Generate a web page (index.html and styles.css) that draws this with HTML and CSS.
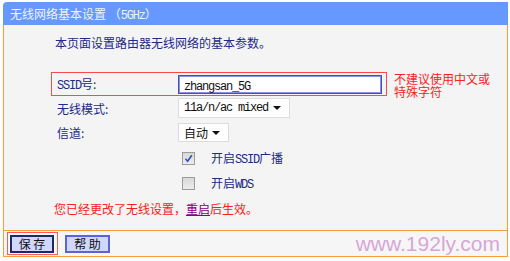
FILE: index.html
```html
<!DOCTYPE html>
<html lang="zh-CN">
<head>
<meta charset="utf-8">
<title>无线网络基本设置</title>
<link rel="stylesheet" href="styles.css">
</head>
<body>
<div class="frame">
  <div class="hdr">无线网络基本设置 （<span class="lat">5GHz</span>）</div>
  <div class="panel">
    <p class="desc">本页面设置路由器无线网络的基本参数。</p>
    <div class="ssid-line">
      <div class="ssid-box">
        <span class="lbl"><span class="lat">SSID</span>号:</span>
        <div class="input"><span class="lat">zhangsan_5G</span></div>
      </div>
      <div class="note">不建议使用中文或<br>特殊字符</div>
    </div>
    <div class="row r-mode">
      <span class="lbl">无线模式:</span>
      <div class="sel sel-mode"><span class="lat">11a/n/ac mixed</span><i class="arr"></i></div>
    </div>
    <div class="row r-ch">
      <span class="lbl">信道:</span>
      <div class="sel sel-ch"><span>自动</span><i class="arr"></i></div>
    </div>
    <div class="chk-row c1">
      <span class="cb on"><svg viewBox="0 0 11 11" width="11" height="11"><path d="M2.5 5.8 L4.6 8.2 L8.8 2.2" fill="none" stroke="#2f4fb8" stroke-width="1.6"/></svg></span>
      <span class="ctext">开启<span class="lat">SSID</span>广播</span>
    </div>
    <div class="chk-row c2">
      <span class="cb"></span>
      <span class="ctext">开启<span class="lat">WDS</span></span>
    </div>
    <p class="msg">您已经更改了无线设置，<a class="rb">重启</a>后生效。</p>
  </div>
  <div class="foot">
    <div class="save-wrap"><button class="btn btn-save">保 存</button></div>
    <button class="btn btn-help">帮 助</button>
    <span class="wm">www.192ly.com</span>
  </div>
</div>
</body>
</html>
```

FILE: styles.css
```css
html, body {
  margin: 0;
  padding: 0;
  background: #ffffff;
}
body {
  font-family: "Noto Sans CJK SC", "Liberation Sans", sans-serif;
  font-size: 12px;
  color: #222a88;
}
.lat {
  font-family: "Liberation Mono", monospace;
  font-size: 12px;
  letter-spacing: -1.2px;
}
.frame {
  margin: 2px 0 0 3px;
  width: 505px;
}
.hdr {
  height: 23px;
  line-height: 23px;
  background: #6699ff;
  border-radius: 4px 0 0 0;
  color: #eef2ff;
  padding-left: 7px;
  box-sizing: border-box;
}
.panel {
  background: #f4f4f4;
  border-left: 1px solid #ff9a3c;
  border-right: 1px solid #ff9a3c;
  border-bottom: 1px solid #ff9a3c;
  height: 205px;
  display: flex;
  flex-direction: column;
}
.desc {
  margin: 0;
  padding: 10px 0 0 51px;
  line-height: 16px;
}
.ssid-line {
  margin-top: 21px;
  display: flex;
  align-items: flex-start;
  margin-left: 47px;
}
.ssid-box {
  width: 336px;
  height: 24px;
  box-sizing: border-box;
  border: 1px solid #ff4a4a;
  display: flex;
  align-items: center;
  padding-left: 5px;
}
.lbl {
  width: 121px;
  flex: none;
}
.input {
  width: 204px;
  height: 19px;
  box-sizing: border-box;
  border: 1px solid #4050c8;
  box-shadow: inset 0 0 0 1px #8890e0;
  background: #ffffff;
  color: #111;
  padding-left: 5px;
  line-height: 17px;
}
.note {
  margin-left: 7px;
  color: #ff2020;
  line-height: 13px;
  margin-top: 0;
}
.row {
  display: flex;
  align-items: center;
  padding-left: 53px;
}
.r-mode { height: 20px; }
.r-ch { height: 19px; margin-top: 5px; }
.sel {
  height: 100%;
  box-sizing: border-box;
  background: #ffffff;
  border: 1px solid #dcdcdc;
  color: #111;
  display: flex;
  align-items: center;
  padding-left: 5px;
  position: relative;
}
.sel-mode { width: 112px; }
.sel-ch { width: 51px; }
.arr {
  position: absolute;
  right: 8px;
  top: 50%;
  margin-top: -2px;
  width: 0;
  height: 0;
  border-left: 4px solid transparent;
  border-right: 4px solid transparent;
  border-top: 4px solid #111;
}
.chk-row {
  display: flex;
  align-items: center;
  height: 20px;
  padding-left: 178px;
}
.c1 { margin-top: 6px; }
.c2 { margin-top: 5px; }
.cb {
  width: 13px;
  height: 13px;
  box-sizing: border-box;
  border: 1px solid #9c9c9c;
  background: linear-gradient(#d8d8d8, #ececec);
  display: flex;
  align-items: center;
  justify-content: center;
  flex: none;
}
.ctext {
  margin-left: 16px;
}
.msg {
  margin: 8px 0 0 50px;
  line-height: 16px;
  color: #ff2020;
}
.rb {
  color: #800080;
  text-decoration: underline;
}
.foot {
  height: 25px;
  border-left: 1px solid #ff9a3c;
  border-right: 1px solid #ff9a3c;
  border-bottom: 1px solid #ff9a3c;
  background: #f6f6f6;
  display: flex;
  align-items: flex-start;
  position: relative;
}
.save-wrap {
  margin: 1px 0 0 3px;
  width: 51px;
  height: 23px;
  box-sizing: border-box;
  border: 1px solid #ff5a5a;
  padding: 2px 0 0 2px;
}
.btn {
  font-family: "Noto Sans CJK SC", sans-serif;
  font-size: 12px;
  color: #111;
  background: #d0d6fc;
  height: 18px;
  box-sizing: border-box;
  padding: 0;
  line-height: 14px;
  margin: 0;
}
.btn-save {
  width: 44px;
  border: 2px solid #1c2a66;
}
.btn-help {
  width: 45px;
  margin: 4px 0 0 7px;
  border: 2px solid #5a64d8;
}
.wm {
  position: absolute;
  right: 7px;
  top: 1px;
  font-family: "Liberation Sans", Arial, sans-serif;
  font-size: 21px;
  line-height: 24px;
  color: #d6a6d8;
}
```
